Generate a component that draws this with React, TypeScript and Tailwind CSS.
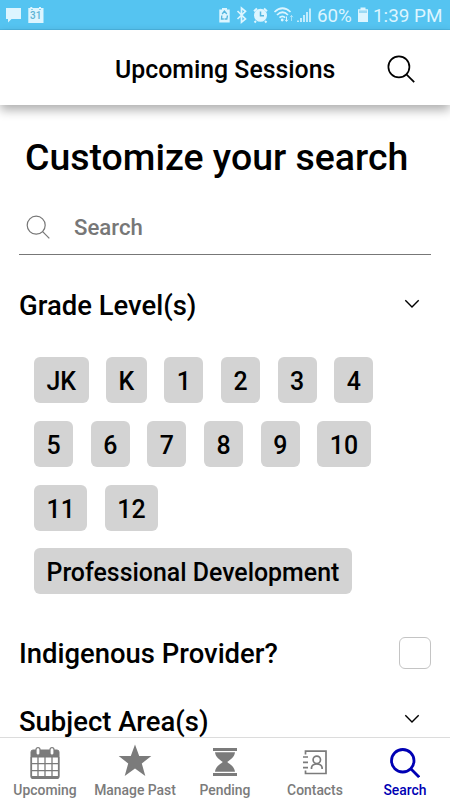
import type { ReactNode } from "react";

const rows = [
  ["JK", "K", "1", "2", "3", "4"],
  ["5", "6", "7", "8", "9", "10"],
  ["11", "12"],
  ["Professional Development"],
];

function SearchIcon({ size, width }: { size: number; width: number }) {
  return (
    <svg width={size} height={size} viewBox="0 0 28 28" fill="none" stroke="currentColor" strokeWidth={width} className="shrink-0">
      <circle cx="11.9" cy="11.9" r="10.5" />
      <path d="M19.4 19.4L27.2 27.2" />
    </svg>
  );
}

function Chevron() {
  return (
    <svg width="16" height="10" viewBox="0 0 16 10" fill="none" stroke="currentColor" strokeWidth="1.4" className="mb-[5px]">
      <path d="M1.3 1.2L8 7.9L14.7 1.2" />
    </svg>
  );
}

function StatusBar() {
  return (
    <div className="flex h-[30px] shrink-0 items-center bg-[#55c4f1] text-[#dcf5ff] shadow-[inset_0_-1px_#4cb6e2]">
      <svg width="50" height="30" viewBox="0 0 50 30" fill="currentColor">
        <path d="M6 8H21V19H11.5L8 22.5V19H6Z" />
        <path d="M28.3 8H30.3V7H32.3V8H39V7H41V8H43.5V23H28.3Z" />
        <path d="M31 9.5H33M39 9.5H41" stroke="#8bcfe9" strokeWidth="1.2" />
        <text x="35.8" y="19.3" fontSize="10" fontWeight="500" textAnchor="middle" fill="#5eb3d4">31</text>
      </svg>
      <svg width="104" height="30" viewBox="216 0 104 30" fill="none" stroke="currentColor" className="ml-[166px]">
        <path d="M219.3 9.5H222V8H227V9.5H229.7V22.5H219.3Z" fill="currentColor" stroke="none" />
        <path d="M222.2 14L224.4 11L226.8 14M227.5 15.5L226.8 19H224.5M223.8 19H221.5L221.8 15.5" stroke="#55b6de" strokeWidth="1.3" />
        <path d="M237.5 11L245.5 19L241.5 22.3V8L245.5 11.3L237.5 19" strokeWidth="1.7" />
        <circle cx="260.5" cy="15.3" r="6.5" fill="currentColor" stroke="none" />
        <path d="M254 11.2L257 8.5M264 8.5L267 11.2M256 21L254.5 22.5M265 21L266.5 22.5" strokeWidth="2" />
        <path d="M260.5 11.5V15.7H264" stroke="#55b6de" strokeWidth="1.5" />
        <path d="M274.5 12Q282.5 4.5 290.5 12M277 15Q282.5 9.5 288 15M279.5 17.7Q282.3 15 285.2 17.7" strokeWidth="1.7" />
        <circle cx="282.2" cy="20" r="1.4" fill="currentColor" stroke="none" />
        <path d="M286.5 16.5V21.5M285 19.7L286.5 21.3L288 19.7" strokeWidth="1" />
        <path d="M291.5 21V15.5M290 17.2L291.5 15.5L293 17.2" strokeWidth="1" opacity=".6" />
        <path d="M298 22V20.5M301 22V18M304 22V15M307 22V12M310 22V8.5" strokeWidth="1.6" />
      </svg>
      <span className="-ml-[3px] w-[38px] pt-[2px] text-[18.8px] leading-[28px] whitespace-nowrap">60%</span>
      <svg width="12" height="16" viewBox="0 0 12 16" fill="currentColor" className="ml-[2px] shrink-0">
        <path d="M1 2.2H3.5V.5H8.5V2.2H11V15H1Z" />
        <path d="M2 3.4H10V6H2Z" fill="#9bdaf5" />
      </svg>
      <span className="ml-[4px] pt-[2px] text-[18.9px] leading-[28px] whitespace-nowrap">1:39 PM</span>
    </div>
  );
}

function CalendarIcon() {
  return (
    <svg width="32" height="34" viewBox="0 0 32 34" fill="none" stroke="currentColor">
      <path d="M2 11V6Q2 4 4 4H28Q30 4 30 6V11Z" fill="currentColor" strokeWidth="1" />
      <path d="M2.2 11V30Q2.2 32.2 4.2 32.2H27.8Q29.8 32.2 29.8 30V11" strokeWidth="1.8" />
      <path d="M9 11V32M16 11V32M23 11V32M2 17.7H30M2 24.7H30" strokeWidth="1.3" />
      <path d="M2 31H30" strokeWidth="2" />
      <rect x="7" y="1.7" width="4" height="7.5" rx="2" fill="white" strokeWidth="1.2" />
      <rect x="21" y="1.7" width="4" height="7.5" rx="2" fill="white" strokeWidth="1.2" />
    </svg>
  );
}

function StarIcon() {
  return (
    <svg width="34" height="34" viewBox="0 0 34 34" fill="currentColor" className="-mt-[4px]">
      <path d="M17 .5L21.2 12H33.3L23.8 19.6L27.3 32L17 24.6L6.7 32L10.2 19.6L.7 12H12.8Z" />
    </svg>
  );
}

function HourglassIcon() {
  return (
    <svg width="24" height="28" viewBox="0 0 24 28" fill="currentColor" className="-mt-[2px]">
      <path d="M0 0H24V3H0ZM0 25H24V28H0ZM2 4.2H22C21.5 9.5 17 11.5 14.2 14C17 16.5 21.5 18.5 22 23.8H2C2.5 18.5 7 16.5 9.8 14C7 11.5 2.5 9.5 2 4.2Z" />
    </svg>
  );
}

function ContactsIcon() {
  return (
    <svg width="24" height="25" viewBox="0 0 24 25" fill="none" stroke="currentColor" strokeWidth="1.7" className="-mt-[2px]">
      <path d="M2.5 4.5V1.2H23V23.5H2.5V20.5M0 7H5M0 12.3H5M0 17.6H5" />
      <circle cx="13.8" cy="9.8" r="3.7" />
      <path d="M8.5 19V17.5Q9.3 14 13.8 14T19.1 17.5V19" />
    </svg>
  );
}

function Tab({ label, active, children }: { label: string; active?: boolean; children: ReactNode }) {
  return (
    <div className={`flex w-[90px] flex-col items-center ${active ? "text-[#0000b4]" : "text-[#7b7b7b]"}`}>
      <div className="flex h-[43px] items-center justify-center pt-[7px]">{children}</div>
      <span className="text-[13.9px] leading-[18px] font-medium whitespace-nowrap">{label}</span>
    </div>
  );
}

export default function App() {
  return (
    <div className="flex h-[800px] w-[450px] flex-col overflow-hidden bg-white font-[Roboto,sans-serif] text-black">
      <StatusBar />
      <header className="z-10 flex h-[75px] shrink-0 items-center bg-white pt-[2px] pl-[115px] shadow-[0_5px_10px_rgba(0,0,0,0.32)]">
        <h1 className="w-[272px] pt-[2px] text-[24.85px] leading-[30px] font-medium whitespace-nowrap">Upcoming Sessions</h1>
        <SearchIcon size={28} width={1.7} />
      </header>
      <main className="min-h-0 flex-1 overflow-hidden px-[19px]">
        <h2 className="mt-[29px] pl-[6px] text-[37.45px] leading-[46px] font-medium whitespace-nowrap">Customize your search</h2>
        <div className="mt-[20px] flex h-[55px] items-center border-b border-[#777] pl-[7px] text-[#777]">
          <SearchIcon size={24} width={1.4} />
          <span className="ml-[24px] text-[22.2px] leading-[30px] font-medium">Search</span>
        </div>
        <div className="mt-[33px] flex h-[36px] items-center justify-between pr-[11px]">
          <h3 className="text-[27.45px] leading-[36px] font-medium">Grade Level(s)</h3>
          <Chevron />
        </div>
        <div className="mt-[33px] flex flex-col gap-[17.8px] pl-[15px]">
          {rows.map((row, i) => (
            <div key={i} className="flex gap-[17.5px]">
              {row.map((g) => (
                <button key={g} className="h-[46px] rounded-[6px] bg-[#d3d3d3] px-[12.5px] pt-[3px] text-[24.9px] leading-[43px] font-medium whitespace-nowrap">
                  {g}
                </button>
              ))}
            </div>
          ))}
        </div>
        <div className="mt-[41px] flex h-[36px] items-center justify-between">
          <h3 className="pt-px text-[27.45px] leading-[36px] font-medium">Indigenous Provider?</h3>
          <span className="size-[32px] rounded-[6px] border border-[#c4c4c4]" />
        </div>
        <div className="mt-[32px] flex h-[36px] items-center justify-between pr-[11px]">
          <h3 className="pt-px text-[27.45px] leading-[36px] font-medium">Subject Area(s)</h3>
          <Chevron />
        </div>
      </main>
      <nav className="flex h-[63px] shrink-0 border-t border-[#dcdcdc] bg-white">
        <Tab label="Upcoming"><CalendarIcon /></Tab>
        <Tab label="Manage Past"><StarIcon /></Tab>
        <Tab label="Pending"><HourglassIcon /></Tab>
        <Tab label="Contacts"><ContactsIcon /></Tab>
        <Tab label="Search" active><SearchIcon size={30} width={2.6} /></Tab>
      </nav>
    </div>
  );
}
